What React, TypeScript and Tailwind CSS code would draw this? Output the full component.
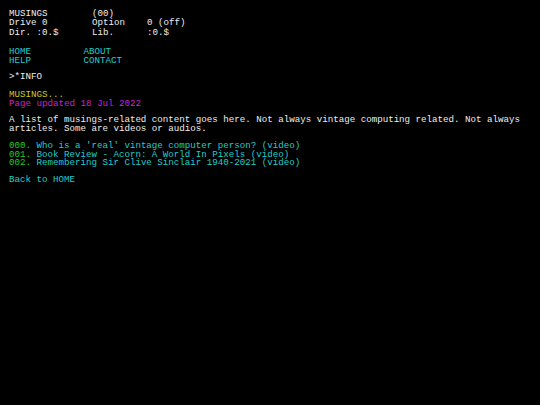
export default function App() {
  const font = { fontFamily: '"Liberation Mono", "DejaVu Sans Mono", monospace' };
  return (
    <div className="w-[540px] h-[405px] bg-black text-[#eeeeee] text-[9.16px] pl-[9px] pt-[8.8px] whitespace-pre overflow-hidden" style={font}>
      <div className="leading-[9.5px]">
        <div className="flex"><span className="w-[83px]">MUSINGS</span><span className="w-[55px]">(00)</span><span></span></div>
        <div className="flex"><span className="w-[83px]">Drive 0</span><span className="w-[55px]">Option</span><span>0 (off)</span></div>
        <div className="flex"><span className="w-[83px]">Dir. :0.$</span><span className="w-[55px]">Lib.</span><span>:0.$</span></div>
      </div>
      <div className="leading-[9px] mt-[10.1px] text-[#22cccc]">
        <div className="flex"><span className="w-[74.5px]">HOME</span><span>ABOUT</span></div>
        <div className="flex"><span className="w-[74.5px]">HELP</span><span>CONTACT</span></div>
      </div>
      <div className="leading-[9px] mt-[7px]">&gt;*INFO</div>
      <div className="leading-[8.3px] mt-[10px]">
        <div className="text-[#cccc22]">MUSINGS...</div>
        <div className="text-[#cc22cc]">Page updated 18 Jul 2022</div>
      </div>
      <div className="leading-[8.3px] mt-[8.4px]">
        <div>A list of musings-related content goes here. Not always vintage computing related. Not always</div>
        <div>articles. Some are videos or audios.</div>
      </div>
      <div className="leading-[8.3px] mt-[9.4px]">
        <div><span className="text-[#22cc22]">000.</span><span className="text-[#22cccc]"> Who is a 'real' vintage computer person? (video)</span></div>
        <div><span className="text-[#22cc22]">001.</span><span className="text-[#22cccc]"> Book Review - Acorn: A World In Pixels (video)</span></div>
        <div><span className="text-[#22cc22]">002.</span><span className="text-[#22cccc]"> Remembering Sir Clive Sinclair 1940-2021 (video)</span></div>
      </div>
      <div className="leading-[8.3px] mt-[8.4px] text-[#22cccc]">Back to HOME</div>
    </div>
  );
}
